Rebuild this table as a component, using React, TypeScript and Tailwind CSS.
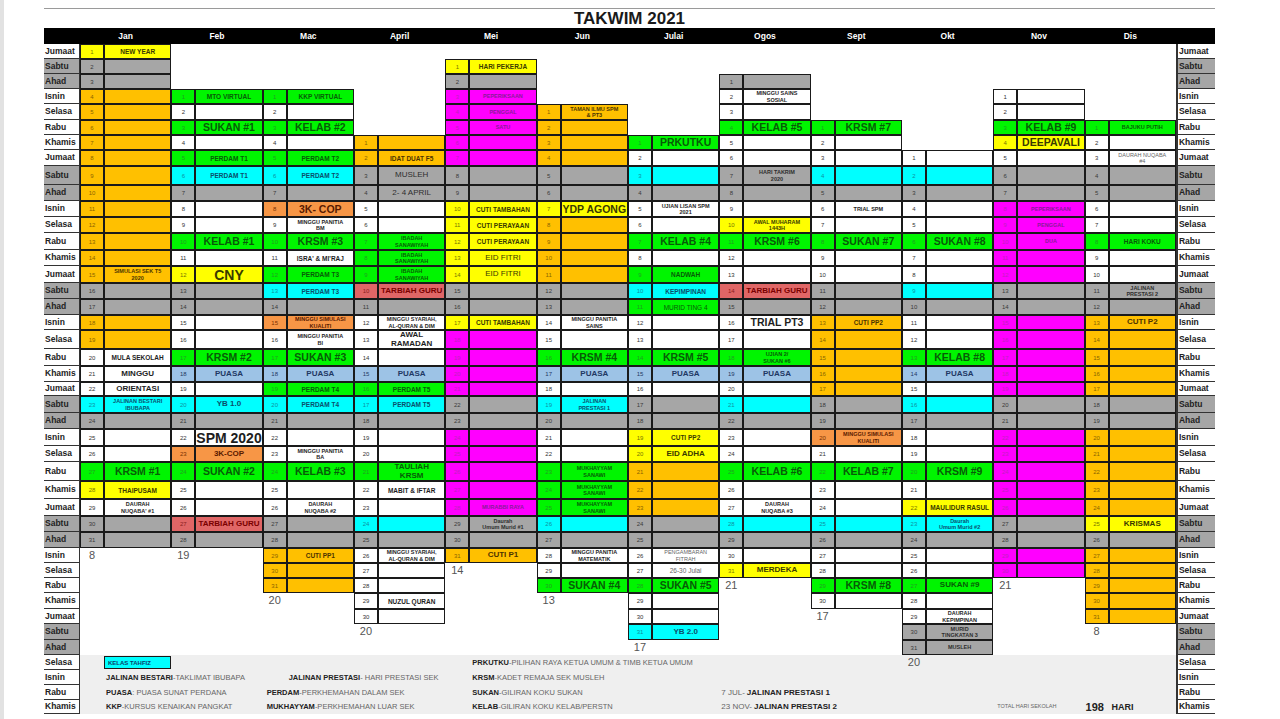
import React, { Fragment } from "react";

type Cell = { c: string; t?: string; s?: string; n?: boolean };
type Month = { name: string; start: number; days: number; count: string; ev: Record<number, Cell> };

// cell background / text colours by code
const BG: Record<string, string> = {
  W: "bg-white",
  G: "bg-[#a6a6a6]",
  Y: "bg-[#ffff00]",
  O: "bg-[#ffc000]",
  D: "bg-[#f79646]",
  R: "bg-[#e06666]",
  B: "bg-[#9dc3e6]",
  C: "bg-[#00ffff]",
  K: "bg-[#00f500]",
  M: "bg-[#ff00ff]",
};
const FG: Record<string, string> = {
  W: "text-[#1e1e1e]",
  G: "text-[#2e2e2e]",
  Y: "text-[#3a3a00]",
  O: "text-[#4d3400]",
  D: "text-[#5a1a00]",
  R: "text-[#7a0000]",
  B: "text-[#1f3864]",
  C: "text-[#0b4f6c]",
  K: "text-[#075c07]",
  M: "text-[#8a1a9a]",
};
const NUM: Record<string, string> = {
  W: "text-[#333]",
  G: "text-[#3a3a3a]",
  Y: "text-[#777700]",
  O: "text-[#8a6400]",
  D: "text-[#7a3000]",
  R: "text-[#8a2020]",
  B: "text-[#1f3864]",
  C: "text-[#1090a0]",
  K: "text-[#20a020]",
  M: "text-[#c020c0]",
};
const SIZE: Record<string, string> = {
  t: "text-[5.5px] leading-[6.5px]",
  s: "text-[6.5px] leading-[7px]",
  m: "text-[8px] leading-[8.5px]",
  l: "text-[10.5px] leading-none",
  x: "text-[14px] leading-none",
};

const DAYS = ["Jumaat", "Sabtu", "Ahad", "Isnin", "Selasa", "Rabu", "Khamis"];
const LEGEND_DAYS = ["Selasa", "Isnin", "Rabu", "Khamis"];

function month(name: string, start: number, days: number, count: string, list: (string | number | boolean)[][]): Month {
  const ev: Record<number, Cell> = {};
  for (const [d, c, t, s, n] of list) {
    const [a, b] = String(d).split("-").map(Number);
    for (let i = a; i <= (b || a); i++) {
      ev[i] = { c: c as string, t: t as string | undefined, s: s as string | undefined, n: n as boolean | undefined };
    }
  }
  return { name, start, days, count, ev };
}

const MONTHS: Month[] = [
  month("Jan", 0, 31, "8", [
    [1, "Y", "NEW YEAR", "s"],
    ["4-14", "O"],
    [15, "O", "SIMULASI SEK T5|2020", "t"],
    ["18-19", "O"],
    [20, "W", "MULA SEKOLAH", "s"],
    [21, "W", "MINGGU", "m"],
    [22, "W", "ORIENTASI", "m"],
    [23, "C", "JALINAN BESTARI|IBUBAPA", "t"],
    [27, "K", "KRSM #1", "l"],
    [28, "Y", "THAIPUSAM", "s"],
    [29, "W", "DAURAH|NUQABA' #1", "t"],
  ]),
  month("Feb", 3, 28, "19", [
    [1, "K", "MTO VIRTUAL", "s"],
    [3, "K", "SUKAN #1", "l"],
    [5, "K", "PERDAM T1", "s"],
    [6, "C", "PERDAM T1", "s"],
    [10, "K", "KELAB #1", "l"],
    [12, "Y", "CNY", "x"],
    [17, "K", "KRSM #2", "l"],
    [18, "B", "PUASA", "m"],
    [20, "C", "YB 1.0", "m"],
    [22, "W", "SPM 2020", "x"],
    [23, "D", "3K-COP", "m"],
    [24, "K", "SUKAN #2", "l"],
    [27, "R", "TARBIAH GURU", "m"],
  ]),
  month("Mac", 3, 31, "20", [
    [1, "K", "KKP VIRTUAL", "s"],
    [3, "K", "KELAB #2", "l"],
    [5, "K", "PERDAM T2", "s"],
    [6, "C", "PERDAM T2", "s"],
    [8, "D", "3K- COP", "l"],
    [9, "W", "MINGGU PANITIA|BM", "t"],
    [10, "K", "KRSM #3", "l"],
    [11, "W", "ISRA' & MI'RAJ", "s"],
    [12, "K", "PERDAM T3", "s"],
    [13, "C", "PERDAM T3", "s"],
    [15, "D", "MINGGU SIMULASI|KUALITI", "t"],
    [16, "W", "MINGGU PANITIA|BI", "t"],
    [17, "K", "SUKAN #3", "l"],
    [18, "B", "PUASA", "m"],
    [19, "K", "PERDAM T4", "s"],
    [20, "C", "PERDAM T4", "s"],
    [23, "W", "MINGGU PANITIA|BA", "t"],
    [24, "K", "KELAB #3", "l"],
    [26, "W", "DAURAH|NUQABA #2", "t"],
    [29, "O", "CUTI PP1", "s"],
    ["30-31", "O"],
  ]),
  month("April", 6, 30, "20", [
    [1, "O"],
    [2, "O", "IDAT DUAT F5", "s"],
    [3, "G", "MUSLEH", "m", true],
    [4, "G", "2- 4 APRIL", "m", true],
    ["7-9", "K", "IBADAH|SANAWIYAH", "t"],
    [10, "R", "TARBIAH GURU", "m"],
    [12, "W", "MINGGU SYARIAH,|AL-QURAN & DIM", "t"],
    [13, "W", "AWAL|RAMADAN", "m"],
    [15, "B", "PUASA", "m"],
    [16, "K", "PERDAM T5", "s"],
    [17, "C", "PERDAM T5", "s"],
    [21, "K", "TAULIAH|KRSM", "m"],
    [22, "W", "MABIT & IFTAR", "s"],
    [24, "C"],
    [26, "W", "MINGGU SYARIAH,|AL-QURAN & DIM", "t"],
    [29, "W", "NUZUL QURAN", "s"],
  ]),
  month("Mei", 1, 31, "14", [
    [1, "Y", "HARI PEKERJA", "s"],
    [3, "M", "PEPERIKSAAN", "t"],
    [4, "M", "PENGGAL", "t"],
    [5, "M", "SATU", "t"],
    ["6-7", "M"],
    [10, "Y", "CUTI TAMBAHAN", "s"],
    ["11-12", "Y", "CUTI PERAYAAN", "s"],
    ["13-14", "Y", "EID FITRI", "m", true],
    [17, "Y", "CUTI TAMBAHAN", "s"],
    ["18-21", "M"],
    ["24-27", "M"],
    [28, "M", "MURABBI RAYA", "t"],
    [29, "G", "Daurah|Umum Murid #1", "t"],
    [31, "O", "CUTI P1", "m"],
  ]),
  month("Jun", 4, 30, "13", [
    [1, "O", "TAMAN ILMU SPM|& PT3", "t"],
    ["2-4", "O"],
    [7, "Y", "YDP AGONG", "l"],
    ["8-11", "O"],
    [14, "W", "MINGGU PANITIA|SAINS", "t"],
    [16, "K", "KRSM #4", "l"],
    [17, "B", "PUASA", "m"],
    [19, "C", "JALINAN|PRESTASI 1", "t"],
    ["23-25", "K", "MUKHAYYAM|SANAWI", "t"],
    [26, "C"],
    [28, "W", "MINGGU PANITIA|MATEMATIK", "t"],
    [30, "K", "SUKAN #4", "l"],
  ]),
  month("Julai", 6, 31, "17", [
    [1, "K", "PRKUTKU", "l"],
    [3, "C"],
    [5, "W", "UJIAN LISAN SPM|2021", "t"],
    [7, "K", "KELAB #4", "l"],
    [9, "K", "NADWAH", "s"],
    [10, "C", "KEPIMPINAN", "s"],
    [11, "K", "MURID TING 4", "s", true],
    [14, "K", "KRSM #5", "l"],
    [15, "B", "PUASA", "m"],
    [19, "Y", "CUTI PP2", "s"],
    [20, "Y", "EID ADHA", "m"],
    ["21-23", "O"],
    [26, "W", "PENGAMBARAN|FITRAH", "t", true],
    [27, "W", "26-30 Julai", "s", true],
    [28, "K", "SUKAN #5", "l"],
    [31, "C", "YB 2.0", "m"],
  ]),
  month("Ogos", 2, 31, "21", [
    [2, "W", "MINGGU SAINS|SOSIAL", "t"],
    [4, "K", "KELAB #5", "l"],
    [7, "G", "HARI TAKRIM|2020", "t"],
    [10, "Y", "AWAL MUHARAM|1443H", "t"],
    [11, "K", "KRSM #6", "l"],
    [14, "R", "TARBIAH GURU", "m"],
    [16, "W", "TRIAL PT3", "l"],
    [18, "K", "UJIAN 2/|SUKAN #6", "t"],
    [19, "B", "PUASA", "m"],
    [21, "C"],
    [25, "K", "KELAB #6", "l"],
    [27, "W", "DAURAH|NUQABA #3", "t"],
    [28, "C"],
    [31, "Y", "MERDEKA", "m"],
  ]),
  month("Sept", 5, 30, "17", [
    [1, "K", "KRSM #7", "l"],
    [4, "C"],
    [6, "W", "TRIAL SPM", "t"],
    [8, "K", "SUKAN #7", "l"],
    [13, "O", "CUTI PP2", "s"],
    ["14-17", "O"],
    [20, "D", "MINGGU SIMULASI|KUALITI", "t"],
    [22, "K", "KELAB #7", "l"],
    [25, "C"],
    [29, "K", "KRSM #8", "l"],
  ]),
  month("Okt", 7, 31, "", [
    [2, "C"],
    [6, "K", "SUKAN #8", "l"],
    [9, "C"],
    [13, "K", "KELAB #8", "l"],
    [14, "B", "PUASA", "m"],
    [16, "C"],
    [20, "K", "KRSM #9", "l"],
    [22, "Y", "MAULIDUR RASUL", "s"],
    [23, "C", "Daurah|Umum Murid #2", "t"],
    [27, "K", "SUKAN #9", "m"],
    [29, "W", "DAURAH|KEPIMPINAN", "t"],
    [30, "G", "MURID|TINGKATAN 3", "t"],
    [31, "G", "MUSLEH", "t"],
  ]),
  month("Nov", 3, 30, "21", [
    [3, "K", "KELAB #9", "l"],
    [4, "Y", "DEEPAVALI", "l"],
    [8, "M", "PEPERIKSAAN", "t"],
    [9, "M", "PENGGAL", "t"],
    [10, "M", "DUA", "t"],
    ["11-12", "M"],
    ["15-19", "M"],
    ["22-26", "M"],
    ["29-30", "M"],
  ]),
  month("Dis", 5, 31, "8", [
    [1, "K", "BAJUKU PUTIH", "t"],
    [3, "W", "DAURAH NUQABA|#4", "t", true],
    [8, "K", "HARI KOKU", "s"],
    [11, "G", "JALINAN|PRESTASI 2", "t"],
    [13, "O", "CUTI P2", "m"],
    ["14-17", "O"],
    ["20-24", "O"],
    [25, "Y", "KRISMAS", "m"],
    ["27-31", "O"],
  ]),
];

const isWeekend = (r: number) => r < 38 && (r % 7 === 1 || r % 7 === 2);

const DayLabel = ({ r, side }: { r: number; side: "l" | "r" }) => {
  const name = r < 38 ? DAYS[r % 7] : LEGEND_DAYS[r - 38];
  return (
    <div
      className={`flex items-center overflow-hidden whitespace-nowrap border-b border-[#333] pl-[1px] text-[8.5px] font-bold text-[#222] ${
        side === "l" ? "border-r" : "border-l-2"
      } ${isWeekend(r) ? "bg-[#a6a6a6]" : "bg-white"}`}
    >
      {name}
    </div>
  );
};

const DayCells = ({ m, d, r }: { m: Month; d: number; r: number }) => {
  const cell = m.ev[d] ?? { c: isWeekend(r) ? "G" : "W" };
  const lines = cell.t ? cell.t.split("|") : [];
  return (
    <>
      <div className={`flex items-center justify-center border border-[#1a1a1a] text-[6px] leading-none ${BG[cell.c]} ${NUM[cell.c]}`}>
        {d}
      </div>
      <div
        className={`flex flex-col items-center justify-center overflow-hidden border border-[#1a1a1a] text-center ${BG[cell.c]} ${
          cell.n ? "font-normal" : "font-bold"
        } ${cell.n && cell.c === "W" ? "text-[#666]" : FG[cell.c]} ${SIZE[cell.s ?? "s"]}`}
      >
        {lines.map((l, i) => (
          <span key={i} className="block whitespace-nowrap">
            {l}
          </span>
        ))}
      </div>
    </>
  );
};

const Legend = () => (
  <div className="col-span-24 row-span-4 grid grid-cols-[repeat(12,24px_67.33px)] grid-rows-[15px_15px_15px_14px] bg-[#efefef] text-[7.5px] leading-none text-[#666]">
    {/* row 1 */}
    <div className="col-start-2 row-start-1 flex items-center py-[1px]">
      <div className="flex h-full w-full items-center border-[1.5px] border-[#1a1a1a] bg-[#00ffff] pl-[3px] text-[6px] font-bold text-[#0b3d6b]">
        KELAS TAHFIZ
      </div>
    </div>
    <div className="col-start-10 row-start-1 flex items-center whitespace-nowrap pl-[3px]">
      <b className="text-[#222]">PRKUTKU</b>-PILIHAN RAYA KETUA UMUM &amp; TIMB KETUA UMUM
    </div>
    <div className="col-start-19 row-start-1 pt-[2px] text-center text-[11px] text-[#555]">20</div>

    {/* row 2 */}
    <div className="col-start-2 row-start-2 flex items-center whitespace-nowrap pl-[2px]">
      <b className="text-[#222]">JALINAN BESTARI</b>-TAKLIMAT IBUBAPA
    </div>
    <div className="col-start-6 row-start-2 flex items-center whitespace-nowrap pl-[2px]">
      <b className="text-[#222]">JALINAN PRESTASI</b>- HARI PRESTASI SEK
    </div>
    <div className="col-start-10 row-start-2 flex items-center whitespace-nowrap pl-[3px]">
      <b className="text-[#222]">KRSM</b>-KADET REMAJA SEK MUSLEH
    </div>

    {/* row 3 */}
    <div className="col-start-2 row-start-3 flex items-center whitespace-nowrap pl-[2px]">
      <b className="text-[#222]">PUASA</b>: PUASA SUNAT PERDANA
    </div>
    <div className="col-start-5 row-start-3 flex items-center whitespace-nowrap pl-[4px]">
      <b className="text-[#222]">PERDAM</b>-PERKHEMAHAN DALAM SEK
    </div>
    <div className="col-start-10 row-start-3 flex items-center whitespace-nowrap pl-[3px]">
      <b className="text-[#222]">SUKAN</b>-GILIRAN KOKU SUKAN
    </div>
    <div className="col-start-15 row-start-3 flex items-center whitespace-nowrap pl-[2px] text-[8px]">
      7 JUL- <b className="ml-[2px] text-[#222]">JALINAN PRESTASI 1</b>
    </div>

    {/* row 4 */}
    <div className="col-start-2 row-start-4 flex items-center whitespace-nowrap pl-[2px]">
      <b className="text-[#222]">KKP</b>-KURSUS KENAIKAN PANGKAT
    </div>
    <div className="col-start-5 row-start-4 flex items-center whitespace-nowrap pl-[4px]">
      <b className="text-[#222]">MUKHAYYAM</b>-PERKHEMAHAN LUAR SEK
    </div>
    <div className="col-start-10 row-start-4 flex items-center whitespace-nowrap pl-[3px]">
      <b className="text-[#222]">KELAB</b>-GILIRAN KOKU KELAB/PERSTN
    </div>
    <div className="col-start-15 row-start-4 flex items-center whitespace-nowrap pl-[2px] text-[8px]">
      23 NOV- <b className="ml-[2px] text-[#222]">JALINAN PRESTASI 2</b>
    </div>
    <div className="col-start-21 row-start-4 flex items-center whitespace-nowrap pl-[4px] text-[5.5px]">
      TOTAL HARI SEKOLAH
    </div>
    <div className="col-start-23 row-start-4 flex items-center whitespace-nowrap pl-[1px] text-[11px] font-bold text-[#222]">
      198
    </div>
    <div className="col-start-24 row-start-4 flex items-center whitespace-nowrap pl-[3px] text-[9px] font-bold text-[#222]">
      HARI
    </div>
  </div>
);

const App = () => {
  return (
    <div className="flex h-[719px] w-[1280px] overflow-hidden bg-white font-['Liberation_Sans',Arial,sans-serif]">
      <div className="w-[4px] shrink-0 bg-[#e2e2e2]" />

      <div className="ml-[40px] w-[1171px] shrink-0">
        {/* Title */}
        <div className="mt-[8px] flex h-[20px] items-center justify-center border-t border-[#9a9a9a] pt-[1px] text-[17px] font-bold text-[#1a1a1a]">
          TAKWIM 2021
        </div>

        {/* Month header */}
        <div className="grid h-[16px] grid-cols-[36px_repeat(12,91.33px)_39px] bg-black text-[8.5px] font-bold text-white">
          <div />
          {MONTHS.map((m) => (
            <div key={m.name} className="flex items-center justify-center">
              {m.name}
            </div>
          ))}
          <div />
        </div>

        {/* Calendar grid */}
        <div className="grid grid-cols-[36px_repeat(12,24px_67.33px)_39px] grid-rows-[15px_15px_15px_15px_16px_15px_15px_16px_19px_16px_16px_16px_17px_16px_17px_16px_16px_15px_19px_17px_16px_14px_17px_16px_17px_16px_19px_18px_17px_16px_16px_15px_15px_15px_16px_15px_16px_15px_15px_15px_15px_14px]">
          {Array.from({ length: 38 }, (_, r) => (
            <Fragment key={r}>
              <DayLabel r={r} side="l" />
              {MONTHS.map((m) => {
                const d = r - m.start + 1;
                if (d >= 1 && d <= m.days) return <DayCells key={m.name} m={m} d={d} r={r} />;
                if (d === m.days + 1)
                  return (
                    <div key={m.name} className="col-span-2">
                      <div className="w-[24px] pt-[2px] text-center text-[11px] leading-none text-[#555]">{m.count}</div>
                    </div>
                  );
                return <div key={m.name} className="col-span-2" />;
              })}
              <DayLabel r={r} side="r" />
            </Fragment>
          ))}

          {/* Legend rows */}
          <DayLabel r={38} side="l" />
          <Legend />
          <DayLabel r={38} side="r" />
          {[39, 40, 41].map((r) => (
            <Fragment key={r}>
              <DayLabel r={r} side="l" />
              <DayLabel r={r} side="r" />
            </Fragment>
          ))}
        </div>
      </div>
    </div>
  );
};

export default App;
